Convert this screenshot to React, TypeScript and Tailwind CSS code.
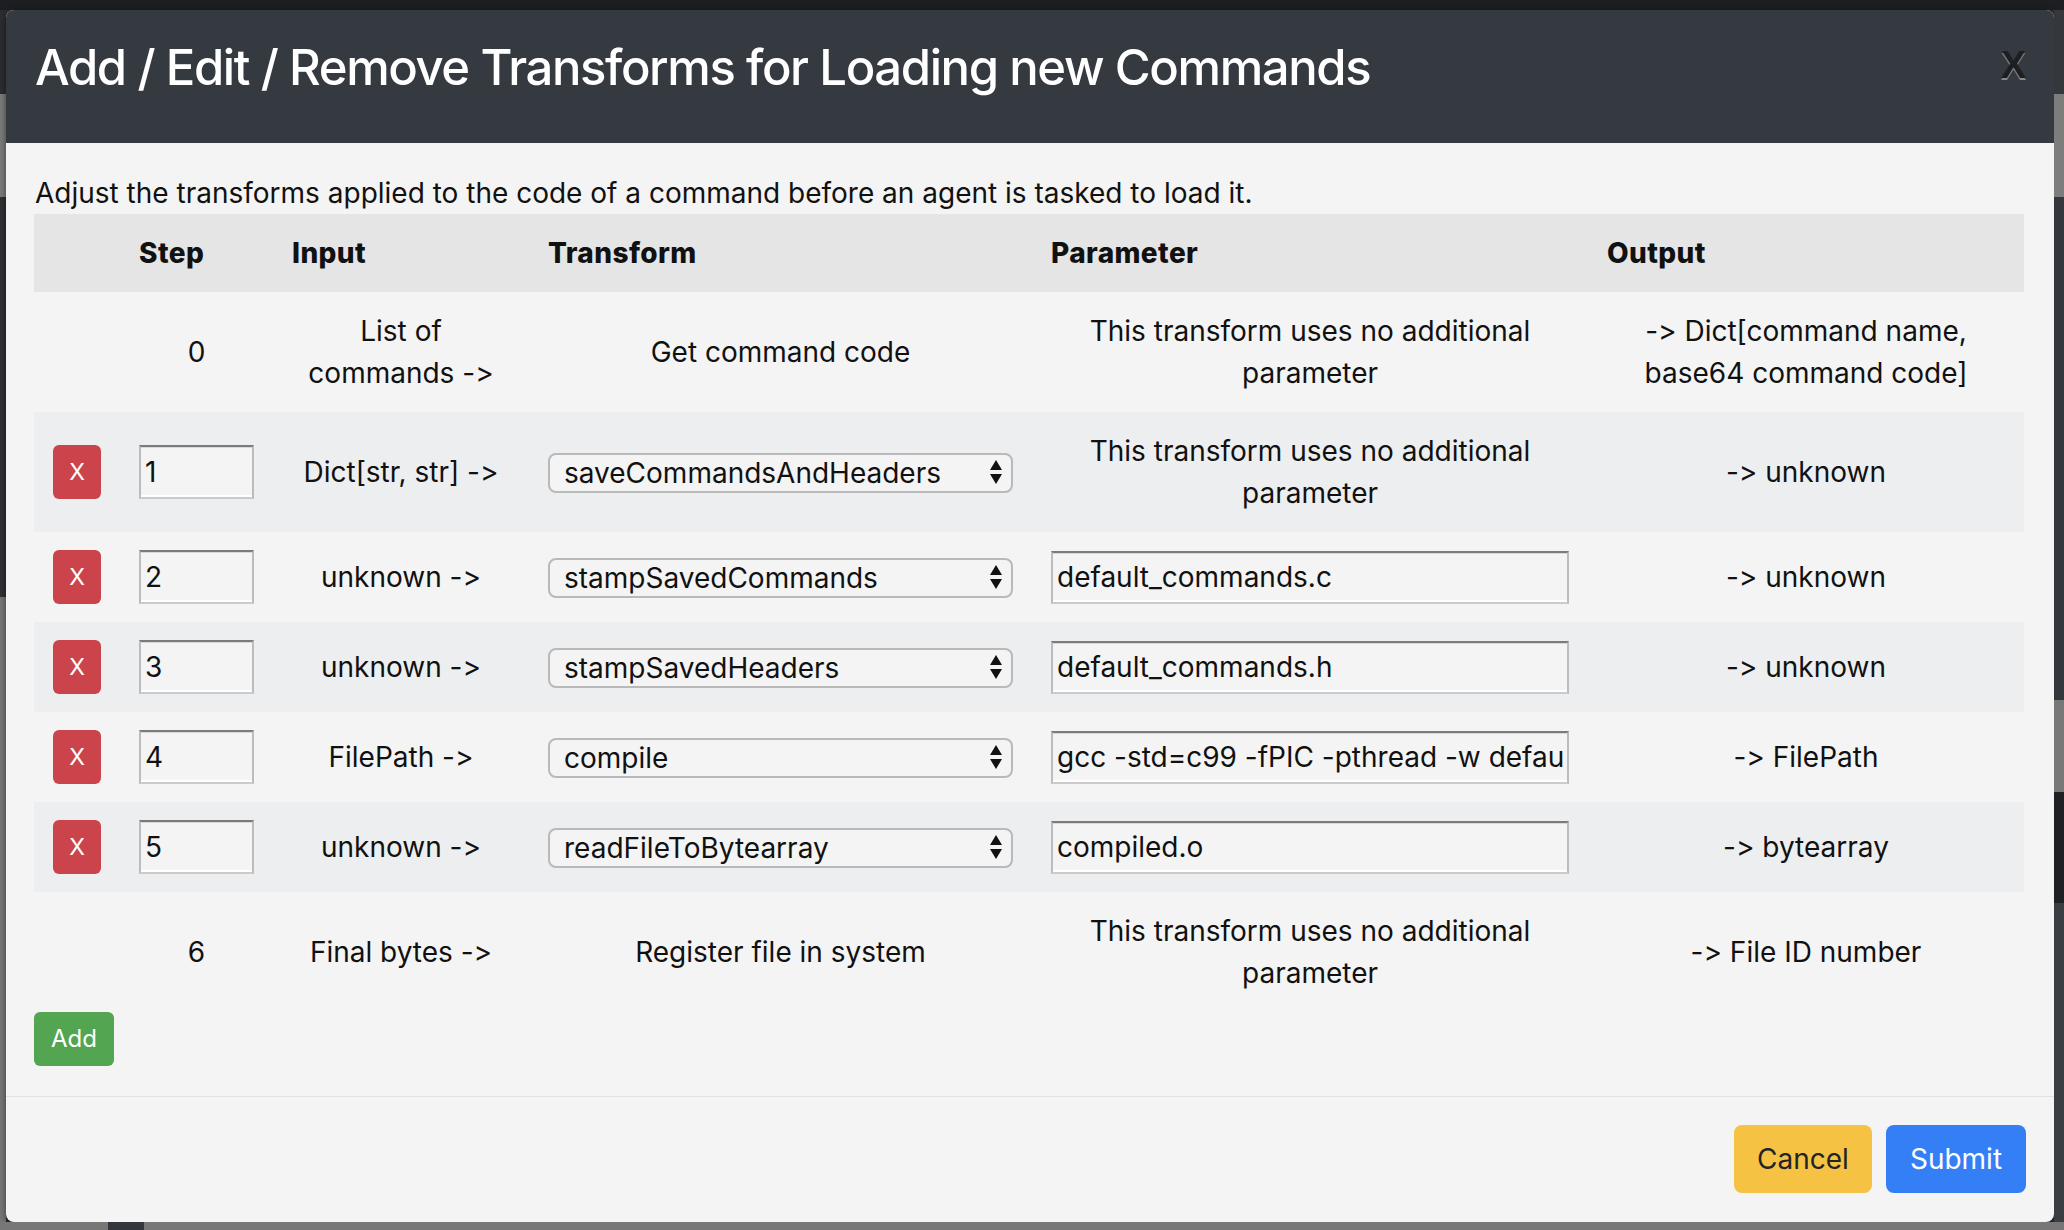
import React from "react";

type Row = {
  step: string;
  input: string;
  transform: string;
  param: string | null;
  output: string;
};

const rows: Row[] = [
  { step: "1", input: "Dict[str, str] ->", transform: "saveCommandsAndHeaders", param: null, output: "-> unknown" },
  { step: "2", input: "unknown ->", transform: "stampSavedCommands", param: "default_commands.c", output: "-> unknown" },
  { step: "3", input: "unknown ->", transform: "stampSavedHeaders", param: "default_commands.h", output: "-> unknown" },
  { step: "4", input: "FilePath ->", transform: "compile", param: "gcc -std=c99 -fPIC -pthread -w default_commands.c -o compiled.o", output: "-> FilePath" },
  { step: "5", input: "unknown ->", transform: "readFileToBytearray", param: "compiled.o", output: "-> bytearray" },
];

const GRID = "grid grid-cols-[86px_153px_256px_503px_556px_436px]";
const CELL = "px-[19px] py-[18px] flex items-center justify-center text-center";

function Arrows() {
  return (
    <svg width="12" height="24" viewBox="0 0 12 24" className="pointer-events-none">
      <polygon points="6,0 12,10 0,10" fill="#111" />
      <polygon points="0,14 12,14 6,24" fill="#111" />
    </svg>
  );
}

function SelectBox({ value }: { value: string }) {
  return (
    <div className="relative w-full h-[40px]">
      <select
        defaultValue={value}
        className="appearance-none w-full h-full rounded-[8px] border-2 border-[#b9b9b9] bg-[#f4f4f4] pl-[14px] pr-[30px] text-[28px] leading-[34px] text-[#111] outline-none [font-feature-settings:'calt'_0,'liga'_0]"
      >
        <option>{value}</option>
      </select>
      <div className="absolute right-[11px] top-[8px]">
        <Arrows />
      </div>
    </div>
  );
}

function InsetInput({ value, className }: { value: string; className: string }) {
  return (
    <input
      readOnly
      defaultValue={value}
      className={
        "h-[53px] bg-[#f4f4f4] border-t-2 border-t-[#7b7b7b] border-x-2 border-x-[#bcbcbc] border-b-2 border-b-[#cbcbcb] shadow-[inset_0_1px_0_#d8d8d8,inset_0_-2px_0_#ffffff] px-[4px] text-[28px] text-[#111] outline-none [font-feature-settings:'calt'_0,'liga'_0] " +
        className
      }
    />
  );
}

export default function App() {
  return (
    <div className="w-[2064px] h-[1230px] overflow-hidden flex flex-col bg-[#2b2d31] font-['Inter',sans-serif] text-[#111] [font-feature-settings:'calt'_0,'liga'_0]">
      {/* top strip of the page behind */}
      <div className="h-[10px] bg-[#1c1e21] shrink-0" />
      <div className="flex flex-1 min-h-0">
        {/* left strip */}
        <div className="w-[6px] flex flex-col shrink-0">
          <div className="h-[84px] bg-[#2a2c30]" />
          <div className="h-[103px] bg-[#7a7a7a]" />
          <div className="h-[400px] bg-[#2e3034]" />
          <div className="flex-1 bg-[#767676]" />
        </div>
        {/* modal */}
        <div className="w-[2048px] h-[1212px] flex flex-col rounded-[8px] overflow-hidden bg-[#f4f4f4] shadow-[0_2px_6px_rgba(0,0,0,0.5)]">
          <div className="h-[133px] shrink-0 bg-[#343a40] flex items-start justify-between pl-[29px] pr-[28px] pt-[22px]">
            <h4 className="text-[49px] leading-[72px] font-medium text-white tracking-[-1.4px]">
              Add / Edit / Remove Transforms for Loading new Commands
            </h4>
            <button className="mt-[13px] text-[38px] leading-[40px] font-bold text-[#1d1f22] [text-shadow:0_2px_0_#8a8a8a] font-['Liberation_Sans',sans-serif]">
              X
            </button>
          </div>
          <div className="flex-1 pl-[28px] pr-[30px] pt-[29px]">
            <p className="text-[28px] leading-[42px] pl-px">
              Adjust the transforms applied to the code of a command before an agent is tasked to load it.
            </p>
            <div className="w-[1990px]">
              <div className={GRID + " bg-[#e5e5e5] font-extrabold text-[28px] leading-[42px] tracking-[0.4px]"}>
                <div className="px-[19px] py-[18px]" />
                <div className="px-[19px] py-[18px]">Step</div>
                <div className="px-[19px] py-[18px]">Input</div>
                <div className="px-[19px] py-[18px]">Transform</div>
                <div className="px-[19px] py-[18px]">Parameter</div>
                <div className="px-[19px] py-[18px]">Output</div>
              </div>
              <div className={GRID + " text-[28px] leading-[42px]"}>
                <div className={CELL} />
                <div className={CELL}>0</div>
                <div className={CELL}>List of commands -&gt;</div>
                <div className={CELL}>Get command code</div>
                <div className={CELL}>This transform uses no additional parameter</div>
                <div className={CELL}>-&gt; Dict[command name, base64 command code]</div>
              </div>
              {rows.map((r, i) => (
                <div
                  key={r.step}
                  className={GRID + " text-[28px] leading-[42px] " + (i % 2 === 0 ? "bg-[#edeef0]" : "")}
                >
                  <div className="px-[19px] py-[18px] flex items-center">
                    <button className="w-[49px] h-[54px] rounded-[6px] bg-[#cb444b] text-white text-[23px]">
                      X
                    </button>
                  </div>
                  <div className="px-[19px] py-[18px] flex items-center">
                    <InsetInput value={r.step} className="w-[115px] h-[54px]" />
                  </div>
                  <div className={CELL}>{r.input}</div>
                  <div className="px-[19px] py-[18px] flex items-center">
                    <SelectBox value={r.transform} />
                  </div>
                  <div className={CELL}>
                    {r.param === null ? (
                      "This transform uses no additional parameter"
                    ) : (
                      <InsetInput value={r.param} className="w-[518px]" />
                    )}
                  </div>
                  <div className={CELL}>{r.output}</div>
                </div>
              ))}
              <div className={GRID + " text-[28px] leading-[42px]"}>
                <div className={CELL} />
                <div className={CELL}>6</div>
                <div className={CELL}>Final bytes -&gt;</div>
                <div className={CELL}>Register file in system</div>
                <div className={CELL}>This transform uses no additional parameter</div>
                <div className={CELL}>-&gt; File ID number</div>
              </div>
            </div>
            <button className="w-[80px] h-[54px] rounded-[6px] bg-[#53a552] text-white text-[24px]">Add</button>
          </div>
          <div className="h-[126px] shrink-0 border-t border-[#dee2e6] flex items-center justify-end gap-[14px] pr-[28px] pb-[2px]">
            <button className="w-[138px] h-[68px] rounded-[8px] bg-[#f5c244] text-[#212529] text-[28px]">Cancel</button>
            <button className="w-[140px] h-[68px] rounded-[8px] bg-[#347ff5] text-white text-[28px]">Submit</button>
          </div>
        </div>
        {/* right strip */}
        <div className="w-[10px] flex flex-col shrink-0">
          <div className="h-[84px] bg-[#34383d]" />
          <div className="h-[103px] bg-[#7d7d7d]" />
          <div className="h-[503px] bg-[#34383d]" />
          <div className="h-[92px] bg-[#787878]" />
          <div className="h-[111px] bg-[#1f2023]" />
          <div className="flex-1 bg-[#3a3d41]" />
        </div>
      </div>
      {/* bottom strip */}
      <div className="h-[8px] shrink-0 flex">
        <div className="w-[108px] bg-[#777777]" />
        <div className="w-[36px] bg-[#33373b]" />
        <div className="flex-1 bg-[#777777]" />
      </div>
    </div>
  );
}
